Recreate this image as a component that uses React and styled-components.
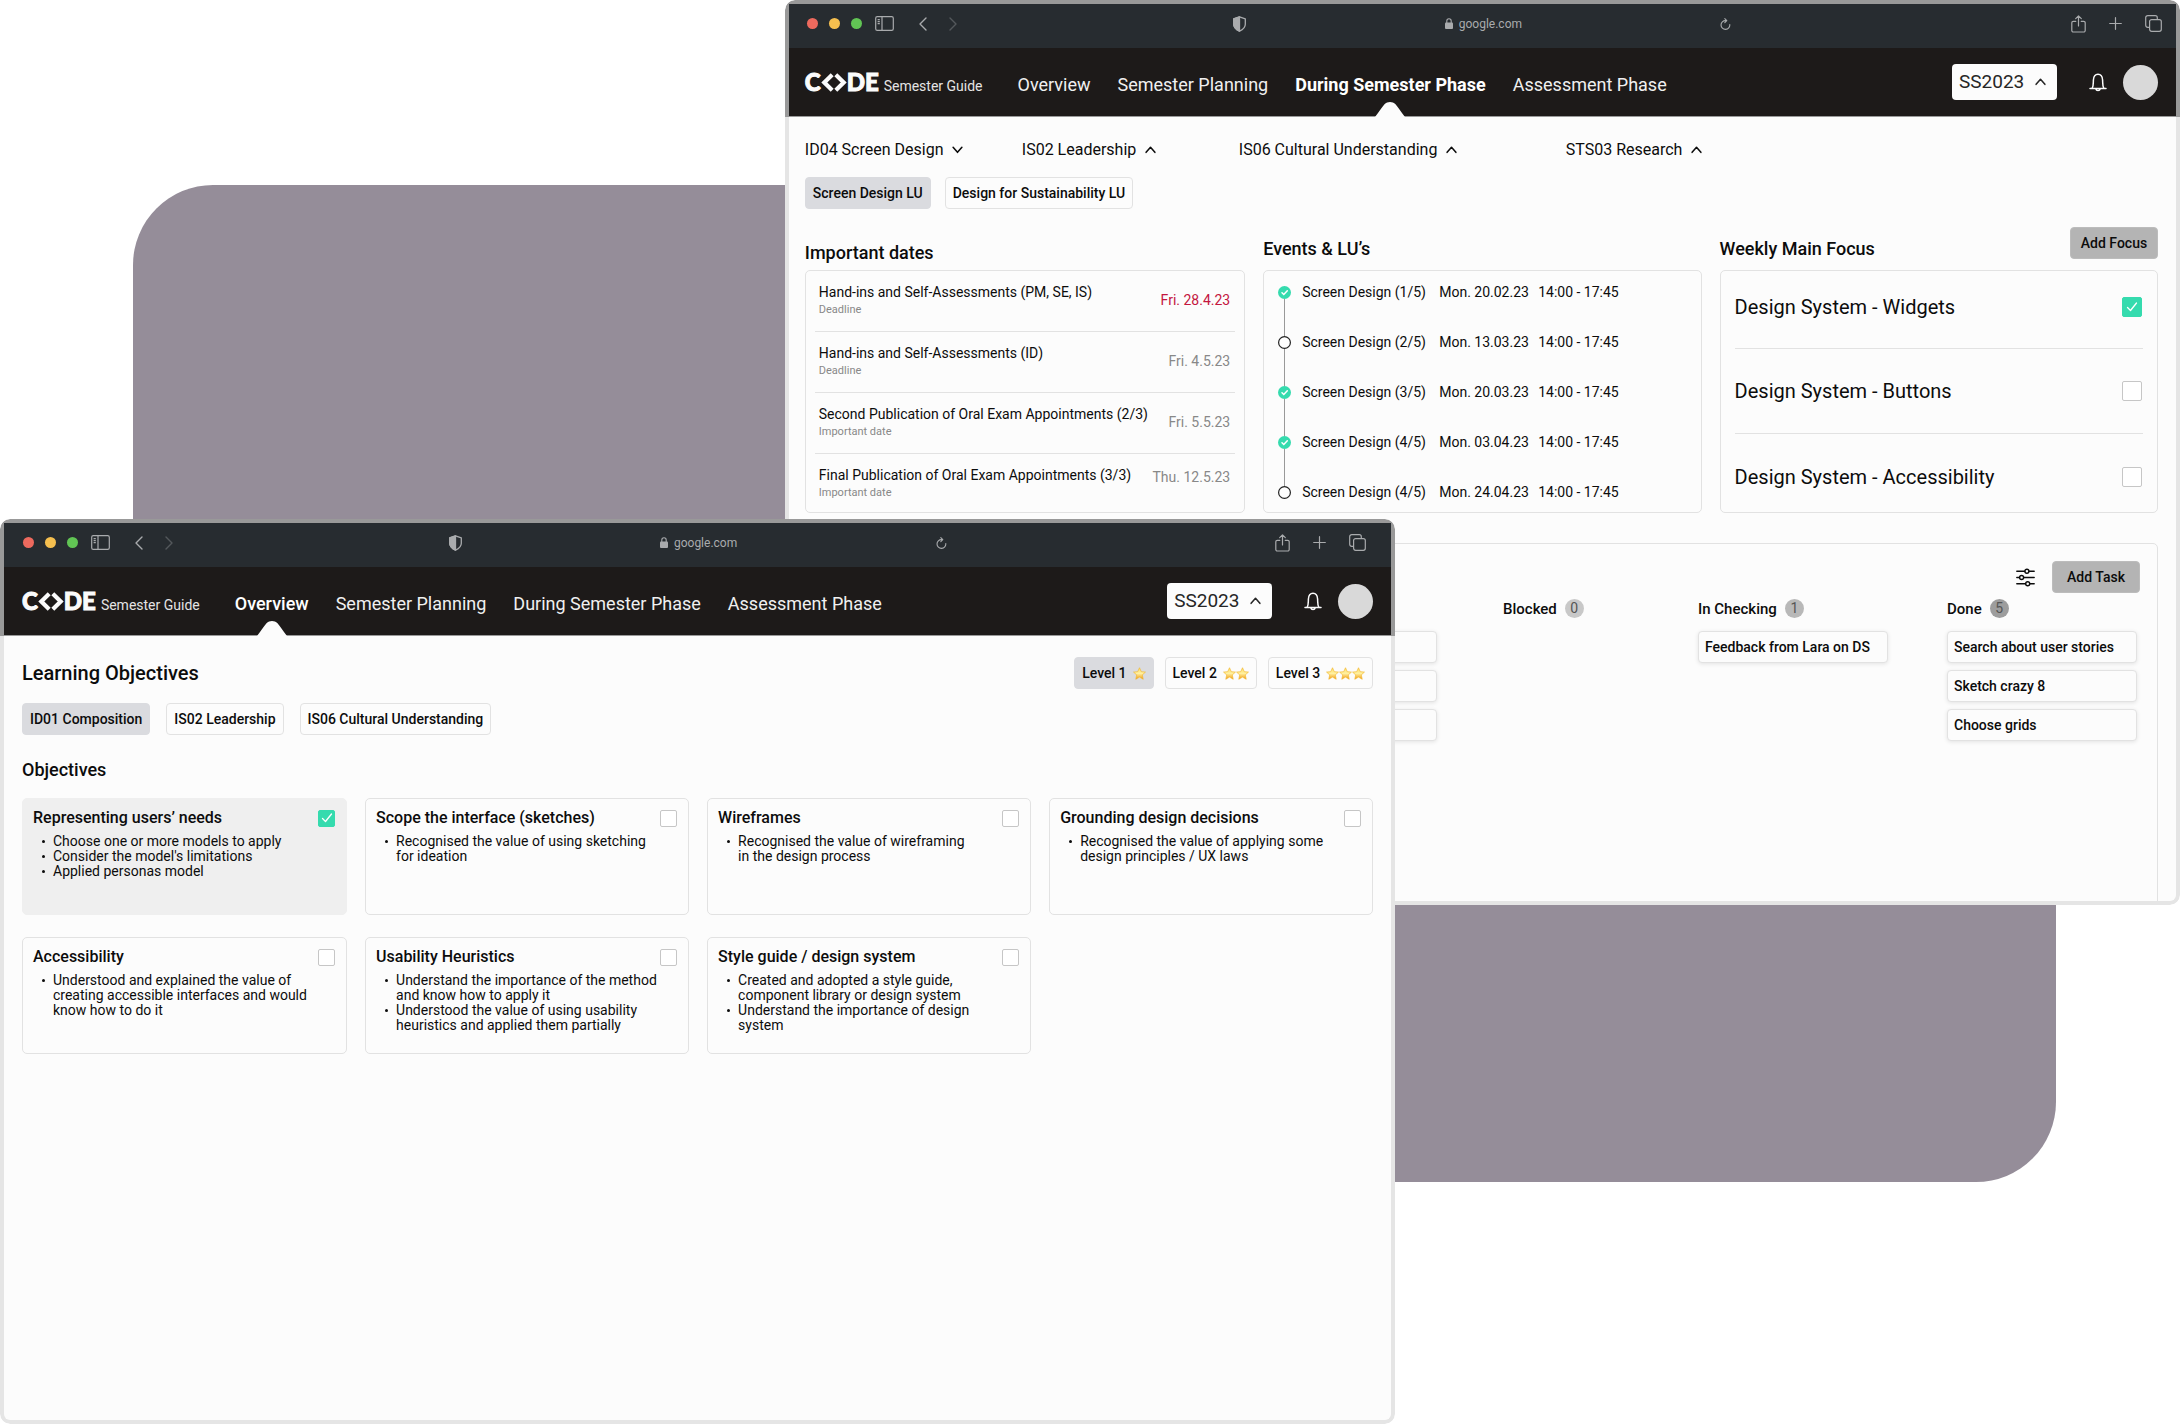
import React, { useId, useState } from "react";
import styled, { createGlobalStyle, css } from "styled-components";

const color = {
  page: "#ffffff",
  backdrop: "#958d99",
  surface: "#fcfcfc",
  chrome: "#272c30",
  header: "#1d1a19",
  frameDark: "#999999",
  frameLight: "#e5e5e5",
  line: "#e2e2e2",
  text: "#0c0c0c",
  muted: "#888888",
  accent: "#35dbae",
  danger: "#c4163f",
  chip: "#dadbdf",
  action: "#b4b4b4",
};

const GlobalStyle = createGlobalStyle`
  *, *::before, *::after { box-sizing: border-box; }
  body {
    margin: 0;
    background: ${color.page};
    color: ${color.text};
    font-family: Roboto, "Liberation Sans", sans-serif;
    font-size: 14px;
    line-height: 20px;
  }
  button, select, input { font: inherit; color: inherit; margin: 0; }
  button { cursor: pointer; }
  h1, h2, h3, p, ul, ol { margin: 0; padding: 0; }
  ul, ol { list-style: none; }
  svg { display: block; flex: none; }
`;

/* ---------- desktop ---------- */

const Desktop = styled.main`
  position: relative;
  min-height: 100vh;
  overflow: hidden;
`;

const Backdrop = styled.div`
  position: absolute;
  inset: 13% 5.7% 17% 6.1%;
  border-radius: 80px;
  background: ${color.backdrop};
`;

const WindowFrame = styled.section`
  position: absolute;
  display: flex;
  flex-direction: column;
  overflow: hidden;
  border-radius: 10px;
  --inset: ${(p) => p.$inset}px;
  ${(p) =>
    p.$front
      ? css`
          top: 519px;
          bottom: 0;
          left: 0;
          width: 64%;
        `
      : css`
          top: 0;
          left: 36%;
          right: 0;
          height: 905px;
        `}
`;

const WindowTop = styled.div`
  border: 4px solid ${color.frameDark};
  border-bottom-width: 1px;
  border-radius: 10px 10px 0 0;
  background: ${color.header};
`;

const WindowBody = styled.div`
  flex: 1;
  min-height: 0;
  overflow: hidden;
  display: flex;
  flex-direction: column;
  border: 4px solid ${color.frameLight};
  border-top: 0;
  border-radius: 0 0 10px 10px;
  background: ${color.surface};
  padding: ${(p) => p.$top}px 18px 0 var(--inset);
`;

/* ---------- browser bar ---------- */

const BrowserBar = styled.div`
  display: grid;
  grid-template-columns: 1fr minmax(0, 498px) 1fr;
  align-items: center;
  height: 44px;
  padding: 0 14px 5px;
  background: ${color.chrome};
  color: #a9abad;
`;

const BarGroup = styled.div`
  display: flex;
  align-items: center;
  gap: ${(p) => p.$gap || 0}px;
  padding-left: ${(p) => p.$start || 0}px;
  padding-right: ${(p) => p.$end || 0}px;
  justify-content: ${(p) => p.$justify || "flex-start"};
`;

const Lights = styled.div`
  display: flex;
  gap: 11px;
  margin-right: 13px;
`;

const Light = styled.span`
  width: 11px;
  height: 11px;
  border-radius: 50%;
  background: ${(p) => p.$color};
`;

const BarButton = styled.button`
  display: flex;
  padding: 0;
  border: 0;
  background: none;
  opacity: ${(p) => (p.disabled ? 0.35 : 1)};
  margin-left: ${(p) => p.$space || 0}px;
`;

const Address = styled.span`
  display: flex;
  align-items: center;
  gap: 6px;
  font-size: 12px;
`;

/* ---------- site header ---------- */

const SiteHeader = styled.header`
  display: flex;
  align-items: stretch;
  height: 68px;
  padding: 0 18px 0 var(--inset);
  color: #fbfbfb;
`;

const Brand = styled.a`
  display: flex;
  align-items: center;
  gap: 5px;
  padding-top: 6px;
  margin-right: 35px;
  color: inherit;
  text-decoration: none;
`;

const Wordmark = styled.span`
  display: flex;
  align-items: center;
  padding-bottom: 6px;
  font-family: Lato, "Liberation Sans", sans-serif;
  font-size: 24px;
  font-weight: 900;
  line-height: 24px;
  -webkit-text-stroke: 1px currentColor;
`;

const BrandNote = styled.span`
  padding-top: 2px;
  font-size: 14px;
  color: #e4e4e4;
`;

const Nav = styled.nav`
  display: flex;
  gap: 27px;
`;

const NavLink = styled.a`
  position: relative;
  display: flex;
  align-items: center;
  padding-top: 6px;
  font-size: 18px;
  font-weight: ${(p) => (p.$active ? p.$weight : 400)};
  color: ${(p) => (p.$active ? "#ffffff" : "#f0f0f0")};
  text-decoration: none;
  white-space: nowrap;
`;

const Notch = styled.svg`
  position: absolute;
  left: calc(50% - 15px);
  bottom: -1px;
`;

const HeaderTools = styled.div`
  display: flex;
  align-items: center;
  margin-left: auto;
`;

const TermPicker = styled.label`
  display: flex;
  align-items: center;
  gap: 10px;
  height: 36px;
  padding: 0 11px 0 7px;
  margin-right: 32px;
  border-radius: 4px;
  background: ${color.surface};
  color: #262626;
`;

const TermSelect = styled.select`
  appearance: none;
  padding: 0;
  border: 0;
  background: none;
  font-size: 19px;
  line-height: 24px;
`;

const Avatar = styled.span`
  width: 35px;
  height: 35px;
  margin-left: 16px;
  border-radius: 50%;
  background: #d9d9d9;
`;

/* ---------- shared controls ---------- */

const Chips = styled.div`
  display: flex;
  gap: ${(p) => p.$gap}px;
`;

const Chip = styled.button`
  display: flex;
  align-items: center;
  gap: 6px;
  height: 32px;
  padding: 0 7px;
  border: 1px solid ${(p) => (p.$active ? color.chip : color.line)};
  border-radius: 4px;
  background: ${(p) => (p.$active ? color.chip : color.surface)};
  font-size: 14px;
  font-weight: 500;
  white-space: nowrap;
`;

const Stars = styled.span`
  display: flex;
`;

const ActionButton = styled.button`
  height: 32px;
  width: 88px;
  padding: 0;
  border: 1px solid #bcbcbc;
  border-radius: 4px;
  background: ${color.action};
  font-size: 14px;
  font-weight: 500;
`;

const Title = styled.h2`
  font-size: ${(p) => p.$size}px;
  font-weight: 500;
  line-height: 20px;
`;

const CheckWrap = styled.span`
  display: grid;
  place-items: center;
  flex: none;
  > * { grid-area: 1 / 1; }
  svg { pointer-events: none; }
`;

const CheckInput = styled.input`
  appearance: none;
  width: ${(p) => p.$size}px;
  height: ${(p) => p.$size}px;
  border: 1px solid #c6c6c6;
  border-radius: 2px;
  background: #ffffff;
  &:checked {
    border-color: ${color.accent};
    background: ${color.accent};
  }
`;

/* ---------- semester phase page ---------- */

const Courses = styled.div`
  display: grid;
  grid-template-columns: 217px 217px 327px auto;
  margin-bottom: 17px;
`;

const CourseToggle = styled.button`
  display: flex;
  align-items: center;
  gap: 9px;
  padding: 0;
  border: 0;
  background: none;
  font-size: 16px;
  line-height: 20px;
  white-space: nowrap;
`;

const Panels = styled.div`
  display: grid;
  grid-template-columns: minmax(0, 440fr) minmax(0, 438fr) minmax(0, 438fr);
  gap: 18px;
  margin: 18px 0 30px;
`;

const PanelHead = styled.div`
  display: flex;
  align-items: flex-end;
  justify-content: space-between;
  height: ${(p) => (p.$low ? 36 : 32)}px;
  margin-bottom: ${(p) => (p.$low ? 7 : 11)}px;
`;

const PanelCard = styled.div`
  height: 243px;
  border: 1px solid ${color.line};
  border-radius: 5px;
`;

const DateList = styled.ul`
  padding: 0 9px;
`;

const DateItem = styled.li`
  display: flex;
  align-items: center;
  justify-content: space-between;
  height: 61px;
  padding: 0 5px 2px 4px;
  border-bottom: 1px solid ${color.line};
  &:last-child {
    height: 47px;
    border-bottom: 0;
  }
`;

const DateText = styled.div`
  align-self: flex-start;
  padding-top: 12px;
`;

const DateTitle = styled.h3`
  font-size: 14px;
  font-weight: 400;
  line-height: 18px;
`;

const DateKind = styled.p`
  font-size: 11px;
  line-height: 18px;
  color: ${color.muted};
`;

const DateValue = styled.time`
  font-size: 14px;
  color: ${(p) => (p.$urgent ? color.danger : color.muted)};
`;

const Timeline = styled.ol`
  padding: 11px 14px;
`;

const EventItem = styled.li`
  position: relative;
  display: grid;
  grid-template-columns: 24px 137px 99px auto;
  height: 50px;
  white-space: nowrap;
  &:not(:last-child)::before {
    content: "";
    position: absolute;
    left: 6px;
    top: 17px;
    width: 1px;
    height: 37px;
    background: #999999;
  }
`;

const EventMark = styled.svg`
  margin-top: 4px;
`;

const FocusList = styled.ul`
  padding: 0 14px;
`;

const FocusItem = styled.li`
  display: flex;
  align-items: center;
  justify-content: space-between;
  height: 85px;
  padding-right: 1px;
  border-bottom: 1px solid ${color.line};
  font-size: 20px;
  line-height: 24px;
  &:first-child { height: 78px; padding-bottom: 6px; }
  &:last-child { border-bottom: 0; }
`;

const Board = styled.section`
  flex: none;
  height: 420px;
  padding: 17px 17px 0;
  border: 1px solid ${color.line};
  border-radius: 5px;
`;

const BoardTools = styled.div`
  display: flex;
  align-items: center;
  justify-content: flex-end;
  gap: 17px;
  margin-bottom: 6px;
`;

const IconButton = styled.button`
  display: flex;
  padding: 0;
  border: 0;
  background: none;
`;

const Lanes = styled.div`
  display: grid;
  grid-template-columns: 256px 195px 249px 190px;
  justify-content: end;
  padding-right: 3px;
`;

const LaneHead = styled.h3`
  display: flex;
  align-items: center;
  gap: 8px;
  height: 19px;
  margin-bottom: 13px;
  font-size: 15px;
  font-weight: 500;
`;

const Count = styled.span`
  width: 19px;
  height: 19px;
  border-radius: 50%;
  background: ${(p) => p.$shade};
  color: #555555;
  font-size: 14px;
  font-weight: 400;
  line-height: 19px;
  text-align: center;
`;

const Tasks = styled.ul`
  display: grid;
  gap: 7px;
  width: 190px;
`;

const Task = styled.li`
  height: 32px;
  padding: 0 6px;
  border: 1px solid ${color.line};
  border-radius: 4px;
  background: ${color.surface};
  box-shadow: 0 1px 4px rgba(0, 0, 0, 0.1);
  font-size: 14px;
  font-weight: 500;
  line-height: 30px;
  white-space: nowrap;
`;

/* ---------- overview page ---------- */

const TitleRow = styled.div`
  display: flex;
  align-items: center;
  justify-content: space-between;
  margin-bottom: 14px;
`;

const Subhead = styled.div`
  margin: 25px 0 18px;
`;

const ObjectiveGrid = styled.div`
  display: grid;
  grid-template-columns: minmax(0, 325fr) repeat(3, minmax(0, 324fr));
  gap: 22px 18px;
`;

const ObjectiveCard = styled.article`
  min-height: 117px;
  padding: 9px 11px 9px 10px;
  border: 1px solid ${(p) => (p.$done ? "#efefef" : color.line)};
  border-radius: 5px;
  background: ${(p) => (p.$done ? "#efefef" : color.surface)};
`;

const ObjectiveHead = styled.label`
  display: flex;
  align-items: center;
  justify-content: space-between;
  margin-bottom: 6px;
  font-size: 16px;
  font-weight: 500;
`;

const Points = styled.ul`
  padding-left: 20px;
`;

const Point = styled.li`
  position: relative;
  font-size: 14px;
  line-height: 15px;
  white-space: pre-line;
  &::before {
    content: "";
    position: absolute;
    left: -11px;
    top: 6px;
    width: 3px;
    height: 3px;
    border-radius: 50%;
    background: ${color.text};
  }
`;

/* ---------- icons ---------- */

const Chevron = ({ down }) => (
  <svg width="11" height="8" viewBox="0 0 10 7" fill="none" stroke="currentColor" strokeWidth="1.4" strokeLinecap="round" strokeLinejoin="round">
    <path d={down ? "M1 1l4 4.6L9 1" : "M1 5.6L5 1l4 4.6"} />
  </svg>
);

const SidebarIcon = () => (
  <svg width="19" height="15" viewBox="0 0 19 15" fill="none" stroke="currentColor" strokeWidth="1.2">
    <rect x="0.7" y="0.7" width="17.6" height="13.6" rx="1.6" />
    <path d="M7 .7v13.6M2.6 3.7h2.2M2.6 5.7h2.2M2.6 7.7h2.2" />
  </svg>
);

const ArrowIcon = ({ forward }) => (
  <svg width="8" height="14" viewBox="0 0 8 14" fill="none" stroke="currentColor" strokeWidth="1.4" strokeLinecap="round" strokeLinejoin="round">
    <path d={forward ? "M1 1l6 6-6 6" : "M7 1L1 7l6 6"} />
  </svg>
);

const ShieldIcon = () => (
  <svg width="13" height="16" viewBox="0 0 13 16" fill="none" stroke="currentColor" strokeWidth="1.3" strokeLinejoin="round">
    <path d="M6.5.8l5.8 2v5.4c0 3.2-2.4 5.4-5.8 7-3.4-1.600-5.800-3.800-5.800-7V2.800z" />
    <path d="M6.500.8v14.400C3.100 13.600.7 11.400.7 8.200V2.800z" fill="currentColor" />
  </svg>
);

const LockIcon = () => (
  <svg width="8" height="11" viewBox="0 0 8 11" fill="none">
    <rect x="0" y="4.600" width="8" height="6.400" rx="1" fill="currentColor" />
    <path d="M1.800 5V3a2.200 2.200 0 0 1 4.400 0v2" stroke="currentColor" strokeWidth="1.100" />
  </svg>
);

const ReloadIcon = () => (
  <svg width="11" height="12" viewBox="0 0 11 12" fill="none" stroke="currentColor" strokeWidth="1.100" strokeLinecap="round" strokeLinejoin="round">
    <path d="M9.800 6.600A4.400 4.400 0 1 1 5.600 2.600M4.800.6l2 2-2 2" />
  </svg>
);

const ShareIcon = () => (
  <svg width="15" height="18" viewBox="0 0 15 18" fill="none" stroke="currentColor" strokeWidth="1.200" strokeLinecap="round" strokeLinejoin="round">
    <path d="M4.800 6.300H2.300A1.500 1.500 0 0 0 .8 7.800v7.700A1.500 1.500 0 0 0 2.300 17h10.400a1.500 1.500 0 0 0 1.500-1.500V7.800a1.500 1.500 0 0 0-1.500-1.500h-2.500M7.500 11V1M4.700 3.700L7.500.9l2.800 2.800" />
  </svg>
);

const PlusIcon = () => (
  <svg width="13" height="13" viewBox="0 0 13 13" fill="none" stroke="currentColor" strokeWidth="1.200" strokeLinecap="round">
    <path d="M6.500.7v11.600M.7 6.500h11.600" />
  </svg>
);

const TabsIcon = () => (
  <svg width="17" height="17" viewBox="0 0 17 17" fill="none" stroke="currentColor" strokeWidth="1.200">
    <rect x="4.600" y="4.600" width="11.700" height="11.700" rx="2" />
    <path d="M4.600 12.300H2.700a2 2 0 0 1-2-2V2.700a2 2 0 0 1 2-2h7.600a2 2 0 0 1 2 2v1.900" />
  </svg>
);

const BellIcon = () => (
  <svg width="18" height="19" viewBox="0 0 18 19" fill="none" stroke="currentColor" strokeWidth="1.500" strokeLinecap="round" strokeLinejoin="round">
    <path d="M1 15.400h16M3.200 15.200C4.600 12.600 4.200 10.400 4.400 7 4.600 3.400 6.300 1.200 9 1.200s4.400 2.200 4.600 5.800c.2 3.400-.2 5.600 1.200 8.200M6.700 15.800a2.400 2.400 0 0 0 4.600 0" />
  </svg>
);

const SlidersIcon = () => (
  <svg width="19" height="19" viewBox="0 0 19 19" fill="none" stroke="currentColor" strokeWidth="1.400" strokeLinecap="round">
    <path d="M.8 3.200h8M13 3.200h5.200M.8 9.500h2.700M7.700 9.500h10.500M.8 15.800h8.700M13.800 15.800h4.400" />
    <circle cx="10.900" cy="3.200" r="2" />
    <circle cx="5.600" cy="9.500" r="2" />
    <circle cx="11.700" cy="15.800" r="2" />
  </svg>
);

const Angles = () => (
  <svg width="26" height="19" viewBox="0 0 26 19" fill="none" stroke="currentColor" strokeWidth="4.200">
    <path d="M11.200 1.800L3.300 9.500l7.900 7.700M14.800 1.800l7.900 7.700-7.900 7.700" />
  </svg>
);

const TickIcon = ({ size }) => (
  <svg width={size} height={size} viewBox="0 0 12 12" fill="none" stroke="#ffffff" strokeWidth="1.300" strokeLinecap="round" strokeLinejoin="round">
    <path d="M1.500 6.500l3 3 6-7.500" />
  </svg>
);

const Star = () => {
  const id = useId();
  return (
    <svg width="13" height="13" viewBox="0 0 14 14">
      <defs>
        <linearGradient id={id} x1="0" y1="0" x2="0" y2="1">
          <stop offset="0" stopColor="#fcdf6a" />
          <stop offset="0.500" stopColor="#fff0a0" />
          <stop offset="1" stopColor="#f09a10" />
        </linearGradient>
      </defs>
      <path
        d="M7 .8l1.900 4.200 4.500.5-3.400 3 1 4.700L7 10.900l-4 2.300 1-4.700-3.400-3 4.500-.5z"
        fill={`url(#${id})`}
        stroke="#f2b62c"
        strokeWidth="0.700"
        strokeLinejoin="round"
      />
    </svg>
  );
};

/* ---------- parts ---------- */

function Checkbox({ size, defaultChecked, ...rest }) {
  const [on, setOn] = useState(!!defaultChecked);
  return (
    <CheckWrap>
      <CheckInput type="checkbox" $size={size} checked={on} onChange={(e) => setOn(e.target.checked)} {...rest} />
      {on && <TickIcon size={12} />}
    </CheckWrap>
  );
}

const NAV = ["Overview", "Semester Planning", "During Semester Phase", "Assessment Phase"];

function BrowserWindow({ active, front, inset, barStart, barEnd, bodyTop, activeWeight, children }) {
  return (
    <WindowFrame $front={front} $inset={inset} aria-label={active}>
      <WindowTop>
        <BrowserBar>
          <BarGroup $start={barStart}>
            <Lights>
              <Light $color="#ed6a5e" />
              <Light $color="#f5bf4f" />
              <Light $color="#61c554" />
            </Lights>
            <BarButton aria-label="Sidebar"><SidebarIcon /></BarButton>
            <BarButton $space={25} aria-label="Back"><ArrowIcon /></BarButton>
            <BarButton $space={22} aria-label="Forward" disabled><ArrowIcon forward /></BarButton>
          </BarGroup>
          <BarGroup $justify="space-between">
            <ShieldIcon />
            <Address><LockIcon />google.com</Address>
            <BarButton aria-label="Reload"><ReloadIcon /></BarButton>
          </BarGroup>
          <BarGroup $gap={23} $end={barEnd} $justify="flex-end">
            <BarButton aria-label="Share"><ShareIcon /></BarButton>
            <BarButton aria-label="New tab"><PlusIcon /></BarButton>
            <BarButton aria-label="Tabs"><TabsIcon /></BarButton>
          </BarGroup>
        </BrowserBar>
        <SiteHeader>
          <Brand href="#">
            <Wordmark>C<Angles />DE</Wordmark>
            <BrandNote>Semester Guide</BrandNote>
          </Brand>
          <Nav>
            {NAV.map((name) => (
              <NavLink key={name} href="#" $active={name === active} $weight={activeWeight}>
                {name}
                {name === active && (
                  <Notch width="30" height="16" viewBox="0 0 30 16" fill={color.surface}>
                    <path d="M0 16C4 11 7 6 9.500 3.300 12.500.2 17.500.2 20.500 3.300 23 6 26 11 30 16z" />
                  </Notch>
                )}
              </NavLink>
            ))}
          </Nav>
          <HeaderTools>
            <TermPicker>
              <TermSelect aria-label="Semester"><option>SS2023</option></TermSelect>
              <Chevron />
            </TermPicker>
            <BarButton aria-label="Notifications"><BellIcon /></BarButton>
            <Avatar />
          </HeaderTools>
        </SiteHeader>
      </WindowTop>
      <WindowBody $top={bodyTop}>{children}</WindowBody>
    </WindowFrame>
  );
}

const COURSES = ["ID04 Screen Design", "IS02 Leadership", "IS06 Cultural Understanding", "STS03 Research"];

const DATES = [
  ["Hand-ins and Self-Assessments (PM, SE, IS)", "Deadline", "Fri. 28.4.23"],
  ["Hand-ins and Self-Assessments (ID)", "Deadline", "Fri. 4.5.23"],
  ["Second Publication of Oral Exam Appointments (2/3)", "Important date", "Fri. 5.5.23"],
  ["Final Publication of Oral Exam Appointments (3/3)", "Important date", "Thu. 12.5.23"],
];

const EVENTS = [
  ["Screen Design (1/5)", "Mon. 20.02.23", true],
  ["Screen Design (2/5)", "Mon. 13.03.23", false],
  ["Screen Design (3/5)", "Mon. 20.03.23", true],
  ["Screen Design (4/5)", "Mon. 03.04.23", true],
  ["Screen Design (4/5)", "Mon. 24.04.23", false],
];

const FOCUS = ["Design System - Widgets", "Design System - Buttons", "Design System - Accessibility"];

const LANES = [
  { name: "Blocked", count: 0, shade: "#c8c8c8", tasks: [] },
  { name: "In Checking", count: 1, shade: "#b8b8b8", tasks: ["Feedback from Lara on DS"] },
  { name: "Done", count: 5, shade: "#9d9d9d", tasks: ["Search about user stories", "Sketch crazy 8", "Choose grids"] },
];

function SemesterPhase() {
  return (
    <BrowserWindow active="During Semester Phase" activeWeight={700} inset={16} barStart={4} barEnd={0} bodyTop={23}>
      <Courses>
        {COURSES.map((name, i) => (
          <CourseToggle key={name} aria-expanded={i === 0}>
            {name}
            <Chevron down={i === 0} />
          </CourseToggle>
        ))}
      </Courses>
      <Chips $gap={14}>
        <Chip $active>Screen Design LU</Chip>
        <Chip>Design for Sustainability LU</Chip>
      </Chips>
      <Panels>
        <section>
          <PanelHead $low><Title $size={18}>Important dates</Title></PanelHead>
          <PanelCard>
            <DateList>
              {DATES.map(([title, kind, date], i) => (
                <DateItem key={title}>
                  <DateText>
                    <DateTitle>{title}</DateTitle>
                    <DateKind>{kind}</DateKind>
                  </DateText>
                  <DateValue $urgent={i === 0}>{date}</DateValue>
                </DateItem>
              ))}
            </DateList>
          </PanelCard>
        </section>
        <section>
          <PanelHead><Title $size={18}>Events &amp; LU’s</Title></PanelHead>
          <PanelCard>
            <Timeline>
              {EVENTS.map(([name, date, done]) => (
                <EventItem key={date}>
                  <EventMark width="13" height="13" viewBox="0 0 13 13" fill="none" strokeLinecap="round">
                    <circle cx="6.5" cy="6.5" r={done ? 6.5 : 5.9} fill={done ? color.accent : "#ffffff"} stroke={done ? "none" : "#222222"} strokeWidth="1.200" />
                    {done && <path d="M4 6.800l1.800 1.700L9.300 4.700" stroke="#ffffff" strokeWidth="1.500" />}
                  </EventMark>
                  <span>{name}</span>
                  <span>{date}</span>
                  <span>14:00 - 17:45</span>
                </EventItem>
              ))}
            </Timeline>
          </PanelCard>
        </section>
        <section>
          <PanelHead>
            <Title $size={18}>Weekly Main Focus</Title>
            <ActionButton>Add Focus</ActionButton>
          </PanelHead>
          <PanelCard>
            <FocusList>
              {FOCUS.map((name, i) => (
                <FocusItem key={name}>
                  <label htmlFor={`focus-${i}`}>{name}</label>
                  <Checkbox size={20} id={`focus-${i}`} defaultChecked={i === 0} />
                </FocusItem>
              ))}
            </FocusList>
          </PanelCard>
        </section>
      </Panels>
      <Board>
        <BoardTools>
          <IconButton aria-label="Filter tasks"><SlidersIcon /></IconButton>
          <ActionButton>Add Task</ActionButton>
        </BoardTools>
        <Lanes>
          <div>
            <LaneHead as="div" />
            <Tasks>
              <Task />
              <Task />
              <Task />
            </Tasks>
          </div>
          {LANES.map((lane) => (
            <div key={lane.name}>
              <LaneHead>
                {lane.name}
                <Count $shade={lane.shade}>{lane.count}</Count>
              </LaneHead>
              <Tasks>
                {lane.tasks.map((t) => <Task key={t}>{t}</Task>)}
              </Tasks>
            </div>
          ))}
        </Lanes>
      </Board>
    </BrowserWindow>
  );
}

const OBJECTIVES = [
  ["Representing users’ needs", ["Choose one or more models to apply", "Consider the model's limitations", "Applied personas model"]],
  ["Scope the interface (sketches)", ["Recognised the value of using sketching\nfor ideation"]],
  ["Wireframes", ["Recognised the value of wireframing\nin the design process"]],
  ["Grounding design decisions", ["Recognised the value of applying some\ndesign principles / UX laws"]],
  ["Accessibility", ["Understood and explained the value of\ncreating accessible interfaces and would\nknow how to do it"]],
  ["Usability Heuristics", ["Understand the importance of the method\nand know how to apply it", "Understood the value of using usability\nheuristics and applied them partially"]],
  ["Style guide / design system", ["Created and adopted a style guide,\ncomponent library or design system", "Understand the importance of design\nsystem"]],
];

function Overview() {
  return (
    <BrowserWindow front active="Overview" activeWeight={500} inset={18} barStart={5} barEnd={11} bodyTop={21}>
      <TitleRow>
        <Title as="h1" $size={20}>Learning Objectives</Title>
        <Chips $gap={11}>
          {[1, 2, 3].map((n) => (
            <Chip key={n} $active={n === 1}>
              Level {n}
              <Stars>{Array.from({ length: n }, (_, i) => <Star key={i} />)}</Stars>
            </Chip>
          ))}
        </Chips>
      </TitleRow>
      <Chips $gap={16}>
        <Chip $active>ID01 Composition</Chip>
        <Chip>IS02 Leadership</Chip>
        <Chip>IS06 Cultural Understanding</Chip>
      </Chips>
      <Subhead><Title $size={18}>Objectives</Title></Subhead>
      <ObjectiveGrid>
        {OBJECTIVES.map(([title, points], i) => (
          <ObjectiveCard key={title} $done={i === 0}>
            <ObjectiveHead>
              {title}
              <Checkbox size={17} defaultChecked={i === 0} />
            </ObjectiveHead>
            <Points>
              {points.map((p) => <Point key={p}>{p}</Point>)}
            </Points>
          </ObjectiveCard>
        ))}
      </ObjectiveGrid>
    </BrowserWindow>
  );
}

export default function App() {
  return (
    <>
      <GlobalStyle />
      <Desktop>
        <Backdrop />
        <SemesterPhase />
        <Overview />
      </Desktop>
    </>
  );
}
